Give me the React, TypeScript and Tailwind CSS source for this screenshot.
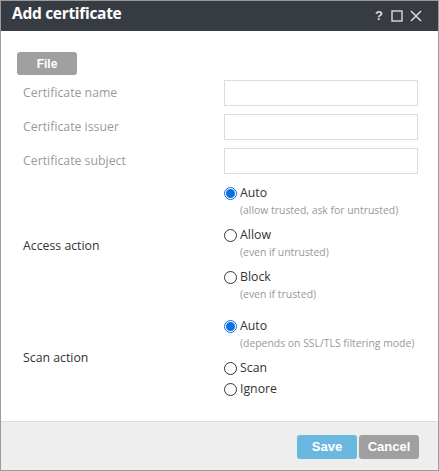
import { useState } from 'react'

type Option = { value: string; label: string; note?: string }

const accessOptions: Option[] = [
  { value: 'auto', label: 'Auto', note: '(allow trusted, ask for untrusted)' },
  { value: 'allow', label: 'Allow', note: '(even if untrusted)' },
  { value: 'block', label: 'Block', note: '(even if trusted)' },
]

const scanOptions: Option[] = [
  { value: 'auto', label: 'Auto', note: '(depends on SSL/TLS filtering mode)' },
  { value: 'scan', label: 'Scan' },
  { value: 'ignore', label: 'Ignore' },
]

function Radio({ checked }: { checked: boolean }) {
  return checked ? (
    <span className="w-[13px] h-[13px] rounded-full border border-[#0a6fe0] flex items-center justify-center shrink-0">
      <span className="w-[9px] h-[9px] rounded-full bg-[#0a6fe0]" />
    </span>
  ) : (
    <span className="w-[13px] h-[13px] rounded-full border border-[#333] shrink-0" />
  )
}

function RadioGroup({ options, value, onChange }: { options: Option[]; value: string; onChange: (v: string) => void }) {
  return (
    <div className="flex flex-col gap-[4px]">
      {options.map((o) => (
        <div key={o.value} className="cursor-pointer" onClick={() => onChange(o.value)}>
          <div className="flex items-center gap-[3px] h-[17px]">
            <Radio checked={value === o.value} />
            <span className="text-[12.3px] text-[#333]">{o.label}</span>
          </div>
          {o.note && <div className="pl-[16px] h-[21px] leading-[17px] text-[10.4px] text-[#999]">{o.note}</div>}
        </div>
      ))}
    </div>
  )
}

function Field({ label }: { label: string }) {
  return (
    <div className="flex items-center">
      <span className="w-[201px] text-[12.3px] text-[#9a9a9a]">{label}</span>
      <input className="w-[194px] h-[26px] border border-[#dcdcdc] bg-white outline-none px-1 text-[13px]" />
    </div>
  )
}

export default function App() {
  const [access, setAccess] = useState('auto')
  const [scan, setScan] = useState('auto')

  return (
    <div
      className="w-[439px] h-[471px] border border-[#9b9b9b] bg-white flex flex-col"
      style={{ fontFamily: '"Open Sans", "Noto Sans", sans-serif' }}
    >
      {/* Title bar */}
      <div className="h-[30px] bg-[#373c43] flex items-center justify-between pl-[11px] pr-[16px] pb-[4px] shrink-0">
        <span className="text-white text-[15.5px] font-bold tracking-[-0.3px]">Add certificate</span>
        <div className="flex items-center gap-[7px] text-[#d9dadc] pt-[3px]">
          <span className="text-[13px] font-bold w-[10px] text-center" style={{ fontFamily: '"Liberation Sans", sans-serif' }}>?</span>
          <svg width="12" height="12" viewBox="0 0 12 12"><rect x="1" y="1" width="10" height="10" fill="none" stroke="currentColor" strokeWidth="1.4" /></svg>
          <svg width="12" height="12" viewBox="0 0 12 12"><path d="M1 1 L11 11 M11 1 L1 11" stroke="currentColor" strokeWidth="1.5" /></svg>
        </div>
      </div>

      {/* Body */}
      <div className="flex-1 pl-[16px] pt-[21px]">
        <button
          className="block w-[60px] h-[23px] rounded-[3px] bg-[#a0a0a0] text-white text-[12px] font-bold"
          style={{ fontFamily: '"Liberation Sans", Arial, sans-serif' }}
        >
          File
        </button>
        <div className="pl-[6px] mt-[5px] flex flex-col gap-[8px]">
          <Field label="Certificate name" />
          <Field label="Certificate issuer" />
          <Field label="Certificate subject" />
        </div>
        <div className="pl-[6px] mt-[11px] flex items-center">
          <span className="w-[201px] text-[12.3px] text-[#333]">Access action</span>
          <RadioGroup options={accessOptions} value={access} onChange={setAccess} />
        </div>
        <div className="pl-[6px] mt-[11px] flex items-center">
          <span className="w-[201px] text-[12.3px] text-[#333]">Scan action</span>
          <RadioGroup options={scanOptions} value={scan} onChange={setScan} />
        </div>
      </div>

      {/* Footer */}
      <div
        className="h-[49px] shrink-0 bg-[#eeeeee] border-t border-[#dddddd] flex items-center justify-end gap-[2px] pr-[19px] pt-[1px]"
        style={{ fontFamily: '"Liberation Sans", Arial, sans-serif' }}
      >
        <button className="w-[60px] h-[24px] rounded-[3px] bg-[#6ab8e0] text-white text-[13px] font-bold">Save</button>
        <button className="w-[60px] h-[24px] rounded-[3px] bg-[#a0a0a0] text-white text-[13px] font-bold">Cancel</button>
      </div>
    </div>
  )
}
